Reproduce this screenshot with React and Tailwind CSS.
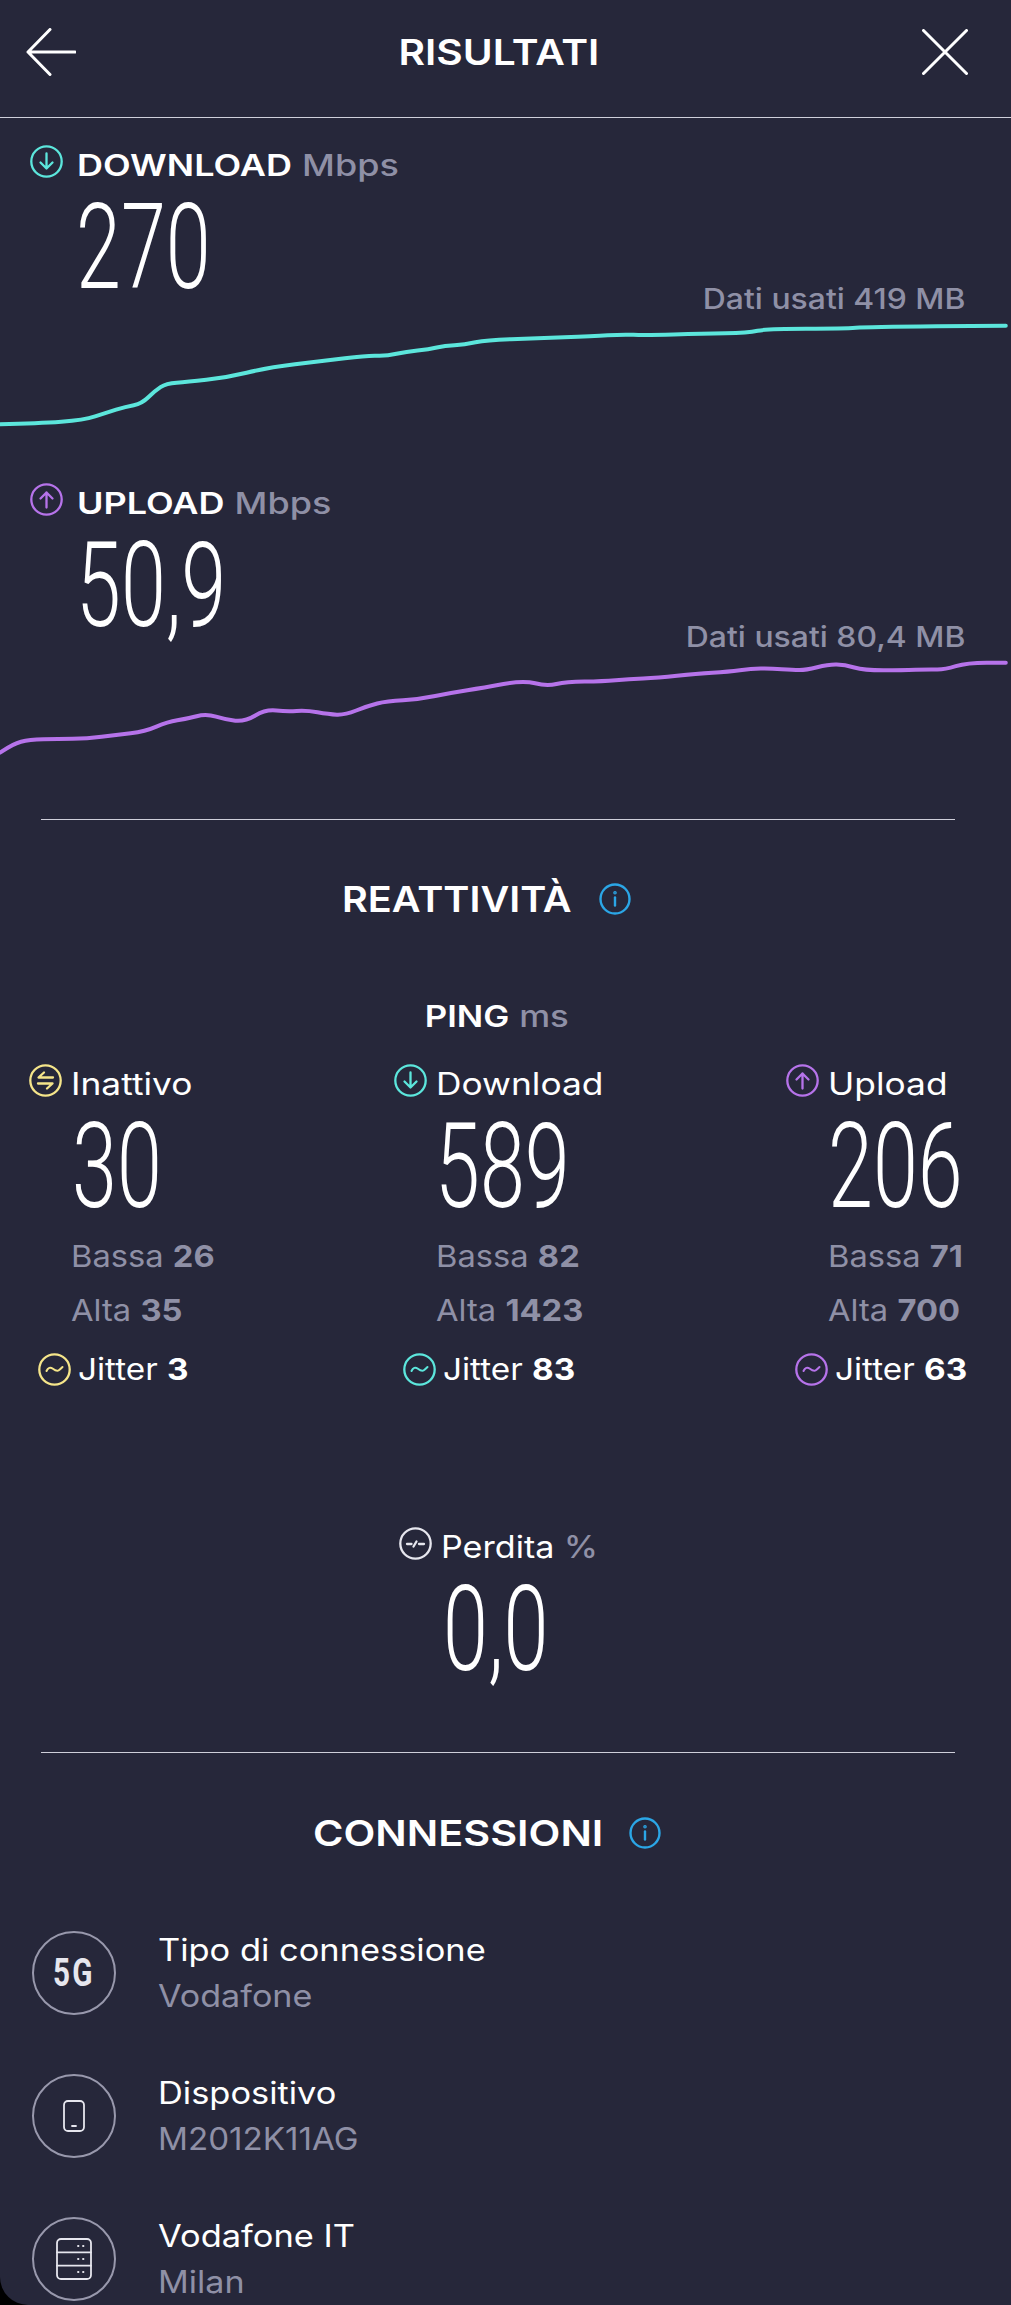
import React from 'react';

const downloadLine = [[0,1270],[60,1267],[130,1257],[165,1235],[195,1217],[220,1208],[240,1170],[258,1147],[290,1143],[350,1130],[415,1100],[500,1080],[570,1063],[600,1065],[630,1052],[665,1045],[690,1034],[720,1031],[755,1017],[830,1012],[920,1006],[965,1000],[1000,1003],[1090,998],[1160,996],[1190,983],[1310,983],[1345,978],[1560,974]];
const uploadLine = [[0,905],[20,878],[45,866],[90,864],[135,863],[180,852],[225,842],[260,812],[290,803],[320,788],[350,806],[380,812],[412,775],[445,782],[475,778],[510,790],[535,792],[570,765],[600,750],[650,745],[700,725],[750,710],[812,688],[848,706],[878,692],[935,691],[975,684],[1020,681],[1080,668],[1130,662],[1165,653],[1195,652],[1230,657],[1250,657],[1285,640],[1310,641],[1340,658],[1400,658],[1440,655],[1465,656],[1500,635],[1560,635]];

// smooth line through midpoints, coordinates were read off a stretched crop
const toPath = (pts, yBase) => {
  const p = pts.map(([x, y]) => [x / 1.551, yBase + y / 3]);
  let d = `M${p[0][0].toFixed(1)} ${p[0][1].toFixed(1)}`;
  for (let i = 1; i < p.length - 1; i++) {
    const mx = (p[i][0] + p[i + 1][0]) / 2;
    const my = (p[i][1] + p[i + 1][1]) / 2;
    d += ` Q${p[i][0].toFixed(1)} ${p[i][1].toFixed(1)} ${mx.toFixed(1)} ${my.toFixed(1)}`;
  }
  const last = p[p.length - 1];
  return `${d} L${last[0].toFixed(1)} ${last[1].toFixed(1)}`;
};

const RingIcon = ({ color, children }) => (
  <svg width="33" height="33" viewBox="0 0 33 33" fill="none" stroke={color} strokeWidth="2.3" strokeLinecap="round" strokeLinejoin="round" className="shrink-0">
    <circle cx="16.5" cy="16.5" r="15.2" />
    {children}
  </svg>
);

const DownIcon = ({ color = '#5ce6dc' }) => (
  <RingIcon color={color}>
    <path d="M16.5 8.500v15M10.500 17.500l6 6 6-6" />
  </RingIcon>
);

const UpIcon = ({ color = '#b673ea' }) => (
  <RingIcon color={color}>
    <path d="M16.5 24.500v-15M10.500 15.500l6-6 6 6" />
  </RingIcon>
);

const IdleIcon = () => (
  <RingIcon color="#f5e58a">
    <path d="M24 13.500H9.500l5.500-5M9 19.500h14.500L18 24.500" />
  </RingIcon>
);

const WaveIcon = ({ color }) => (
  <RingIcon color={color}>
    <path d="M8.500 18c1.500-3.500 4-4 6-2.500s4.500 3 6 2 2.500-2 4-3.500" strokeWidth="2" />
  </RingIcon>
);

const LossIcon = () => (
  <RingIcon color="#e6e6ee">
    <path d="M8 17h4.500M14.500 19.500l3-5M20 17h5" />
  </RingIcon>
);

const InfoIcon = () => (
  <svg width="32" height="32" viewBox="0 0 32 32" fill="none" stroke="#2ba6e6" strokeWidth="2.4" strokeLinecap="round" className="shrink-0">
    <circle cx="16" cy="16" r="14.500" />
    <path d="M16 14.500v8" />
    <circle cx="16" cy="9.800" r="0.600" fill="#2ba6e6" />
  </svg>
);

const BigNumber = ({ value }) => (
  <div className='h-[85px] leading-[88px] text-[119px] text-white whitespace-nowrap origin-left scale-x-[0.68] font-light font-["Roboto",sans-serif]'>
    {value}
  </div>
);

const SpeedSection = ({ icon, label, value, used, line, yBase, viewTop, chartH, color, topPad }) => (
  <section className={topPad}>
    <div className="flex items-start pl-[30px] h-[33px]">
      {icon}
      <div className="ml-[14px] mt-[2px] text-[30px] leading-[36px] whitespace-nowrap origin-left scale-x-[1.2]">
        <span className="font-semibold text-white">{label}</span>{' '}
        <span className="font-medium text-[#8f90a6]">Mbps</span>
      </div>
    </div>
    <div className="ml-[76px] mt-[26px]">
      <BigNumber value={value} />
    </div>
    <div className="pr-[40px] text-right text-[28px] leading-[20px] font-medium text-[#8f90a6] whitespace-nowrap origin-right scale-x-[1.14]">{used}</div>
    <svg width="1011" height={chartH} viewBox={`0 ${viewTop} 1011 ${chartH}`} fill="none" className="block">
      <path d={toPath(line, yBase)} stroke={color} strokeWidth="4" strokeLinejoin="round" strokeLinecap="round" />
    </svg>
  </section>
);

const PingColumn = ({ icon, jitterIcon, label, value, low, high, jitter, numLeft }) => (
  <div>
    <div className="flex items-start h-[33px]">
      {icon}
      <span className="ml-[9px] mt-[2px] text-[31px] leading-[36px] text-white origin-left scale-x-[1.14]">{label}</span>
    </div>
    <div className={`mt-[26px] ${numLeft}`}>
      <BigNumber value={value} />
    </div>
    <div className="ml-[42px] mt-[33px] text-[30px] leading-[30px] text-[#8f90a6] whitespace-nowrap origin-left scale-x-[1.09]">
      Bassa <span className="font-bold">{low}</span>
    </div>
    <div className="ml-[42px] mt-[24px] text-[30px] leading-[30px] text-[#8f90a6] whitespace-nowrap origin-left scale-x-[1.09]">
      Alta <span className="font-bold">{high}</span>
    </div>
    <div className="ml-[9px] mt-[28px] flex items-center">
      {jitterIcon}
      <span className="ml-[7px] text-[30px] leading-[33px] text-white whitespace-nowrap origin-left scale-x-[1.11]">
        Jitter <span className="font-bold">{jitter}</span>
      </span>
    </div>
  </div>
);

const ConnRow = ({ icon, title, sub, subScale = 'scale-x-[1.1]' }) => (
  <div className="flex items-start">
    <div className="w-[84px] h-[84px] rounded-full border-2 border-[#9898ac] flex items-center justify-center shrink-0">
      {icon}
    </div>
    <div className="ml-[42px] pt-[4px]">
      <div className="text-[31px] leading-[30px] text-white whitespace-nowrap origin-left scale-x-[1.11]">{title}</div>
      <div className={`mt-[16px] text-[31px] leading-[30px] text-[#8f90a6] whitespace-nowrap origin-left ${subScale}`}>{sub}</div>
    </div>
  </div>
);

export default function App() {
  return (
    <div className='h-[2305px] bg-black overflow-hidden font-["Inter","Noto_Sans",sans-serif]'>
      <div className="h-full bg-[#26273a] rounded-bl-[28px] overflow-hidden">
        {/* Top bar */}
        <header className="h-[118px] border-b border-[#cfcfda] pb-[14px] pl-[26px] pr-[43px] flex items-center justify-between">
          <svg width="50" height="48" viewBox="0 0 50 48" fill="none" stroke="#fff" strokeWidth="3" strokeLinecap="round" strokeLinejoin="round">
            <path d="M49 24H2M24 1.500 2 24l22 22.500" />
          </svg>
          <h1 className="text-[36px] leading-[40px] font-semibold text-white origin-center scale-x-[1.13]">RISULTATI</h1>
          <svg width="46" height="46" viewBox="0 0 46 46" fill="none" stroke="#fff" strokeWidth="3" strokeLinecap="round">
            <path d="M1.500 1.500l43 43M44.500 1.500l-43 43" />
          </svg>
        </header>

        <SpeedSection topPad="pt-[27px]" icon={<DownIcon />} label="DOWNLOAD" value="270" used="Dati usati 419 MB" line={downloadLine} yBase={0} viewTop={308} chartH={132} color="#5ce6dc" />
        <SpeedSection topPad="pt-[42px]" icon={<UpIcon />} label="UPLOAD" value="50,9" used="Dati usati 80,4 MB" line={uploadLine} yBase={450} viewTop={646} chartH={172} color="#b673ea" />

        <div className="ml-[41px] mr-[56px] h-px bg-[#cfcfda]" />

        <div className="mt-[63px] ml-[342px] flex items-center h-[32px]">
          <h2 className="w-[230px] text-[36px] leading-[32px] font-semibold text-white whitespace-nowrap origin-left scale-x-[1.1]">REATTIVITÀ</h2>
          <span className="ml-[27px]"><InfoIcon /></span>
        </div>

        <div className="mt-[86px] pr-[15px] text-center text-[30px] leading-[30px] origin-center scale-x-[1.16]">
          <span className="font-semibold text-white">PING</span>{' '}
          <span className="font-medium text-[#8f90a6]">ms</span>
        </div>

        <div className="mt-[33px] pl-[29px] grid grid-cols-[365px_392px_1fr]">
          <PingColumn icon={<IdleIcon />} jitterIcon={<WaveIcon color="#f5e58a" />} label="Inattivo" value="30" low="26" high="35" jitter="3" numLeft="ml-[43px]" />
          <PingColumn icon={<DownIcon />} jitterIcon={<WaveIcon color="#5ce6dc" />} label="Download" value="589" low="82" high="1423" jitter="83" numLeft="ml-[41px]" />
          <PingColumn icon={<UpIcon />} jitterIcon={<WaveIcon color="#b673ea" />} label="Upload" value="206" low="71" high="700" jitter="63" numLeft="ml-[42px]" />
        </div>

        {/* Packet loss */}
        <div className="mt-[141px] ml-[399px]">
          <div className="flex items-start h-[33px]">
            <LossIcon />
            <span className="ml-[9px] mt-[2px] text-[31px] leading-[36px] text-white whitespace-nowrap origin-left scale-x-[1.1]">
              Perdita <span className="font-medium text-[#8f90a6]">%</span>
            </span>
          </div>
          <div className="ml-[44px] mt-[26px]">
            <BigNumber value="0,0" />
          </div>
        </div>

        <div className="mt-[81px] ml-[41px] mr-[56px] h-px bg-[#cfcfda]" />

        <div className="mt-[64px] ml-[313px] flex items-center h-[32px]">
          <h2 className="w-[288px] text-[36px] leading-[32px] font-semibold text-white whitespace-nowrap origin-left scale-x-[1.15]">CONNESSIONI</h2>
          <span className="ml-[28px]"><InfoIcon /></span>
        </div>

        <div className="mt-[82px] pl-[32px] flex flex-col gap-[59px]">
          <ConnRow
            title="Tipo di connessione"
            sub="Vodafone"
            icon={<span className='text-[38px] leading-none font-bold text-[#e6e6ee] tracking-[3px] scale-x-[0.78] font-["Roboto",sans-serif]'>5G</span>}
          />
          <ConnRow
            title="Dispositivo"
            sub="M2012K11AG"
            subScale="scale-x-[1.07]"
            icon={
              <svg width="22" height="32" viewBox="0 0 22 32" fill="none" stroke="#e6e6ee" strokeWidth="1.8" strokeLinecap="round">
                <rect x="1" y="1" width="20" height="30" rx="4" />
                <path d="M9 26h4" />
              </svg>
            }
          />
          <ConnRow
            title="Vodafone IT"
            sub="Milan"
            icon={
              <svg width="36" height="42" viewBox="0 0 36 42" fill="none" stroke="#e6e6ee" strokeWidth="1.8" strokeLinecap="round">
                <rect x="1" y="1" width="34" height="40" rx="4" />
                <path d="M1 14.300h34M1 27.700h34M22 8h.5M27 8h.5M22 21h.5M27 21h.5M22 34h.5M27 34h.5" />
              </svg>
            }
          />
        </div>
      </div>
    </div>
  );
}
